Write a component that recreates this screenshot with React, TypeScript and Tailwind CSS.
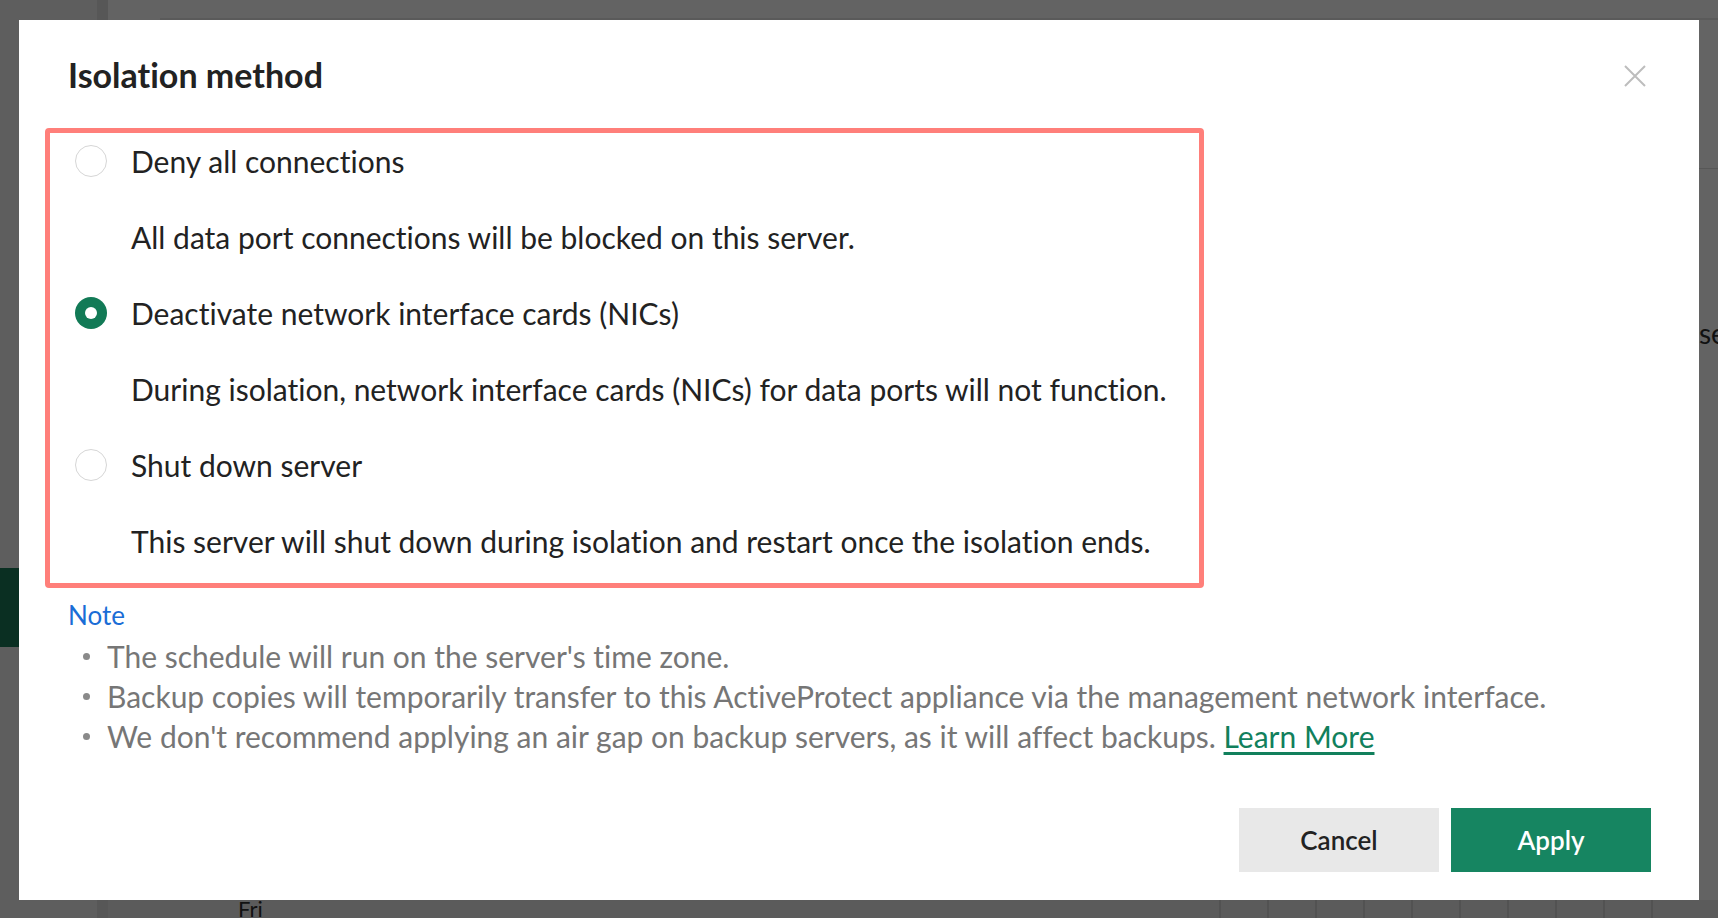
import { useState } from "react";

const options = [
  {
    id: "deny",
    label: "Deny all connections",
    desc: "All data port connections will be blocked on this server.",
  },
  {
    id: "nic",
    label: "Deactivate network interface cards (NICs)",
    desc: "During isolation, network interface cards (NICs) for data ports will not function.",
  },
  {
    id: "shutdown",
    label: "Shut down server",
    desc: "This server will shut down during isolation and restart once the isolation ends.",
  },
];

const notes = [
  "The schedule will run on the server's time zone.",
  "Backup copies will temporarily transfer to this ActiveProtect appliance via the management network interface.",
  "We don't recommend applying an air gap on backup servers, as it will affect backups.",
];

const Radio = ({ checked }: { checked: boolean }) =>
  checked ? (
    <span className="flex h-[32px] w-[32px] shrink-0 items-center justify-center rounded-full bg-[#127a56]">
      <span className="h-[12px] w-[12px] rounded-full bg-white" />
    </span>
  ) : (
    <span className="h-[32px] w-[32px] shrink-0 rounded-full border-[1.5px] border-[#d6d6d6] bg-white" />
  );

// page behind the dimmed overlay, only its edges show
const BackgroundPage = () => (
  <div className="flex h-screen w-full bg-[#636363]">
    <div className="flex w-[97px] flex-col bg-[#5e5e5e]">
      <div className="h-[568px]" />
      <div className="h-[79px] bg-[#0a2f22]" />
    </div>
    <div className="w-[11px] bg-[#575757]" />
    <div className="flex flex-1 flex-col">
      <div className="flex h-[20px]">
        <div className="w-[52px]" />
        <div className="flex-1 border-b-2 border-[#5a5a5a]" />
      </div>
      <div className="flex flex-1 justify-end">
        <div className="flex w-[19px] flex-col">
          <div className="h-[148px] bg-[#646464]" />
          <div className="h-[1px] bg-[#575757]" />
          <div className="whitespace-nowrap pt-[147px] text-[28px] leading-[34px] text-[#111]">
            se
          </div>
        </div>
      </div>
      <div className="flex h-[18px] bg-[#5b5b5b]">
        <div className="w-[52px]" />
        <div className="w-[78px]" />
        <div className="text-[22px] leading-[18px] text-[#111]">Fri</div>
        <div className="flex flex-1 justify-end">
          {Array.from({ length: 10 }).map((_, i) => (
            <div key={i} className="w-[48px] border-l-2 border-[#525252]" />
          ))}
          <div className="w-[19px]" />
        </div>
      </div>
    </div>
  </div>
);

export default function App() {
  const [selected, setSelected] = useState("nic");

  return (
    <div className="relative h-screen w-full overflow-hidden font-['Lato',sans-serif] [font-variant-ligatures:none]">
      <BackgroundPage />

      {/* Modal overlay */}
      <div className="fixed inset-0 flex pb-[18px] pl-[19px] pr-[19px] pt-[20px]">
        <div className="flex flex-1 flex-col bg-white pl-[49px] pr-[48px] pt-[33px]">
          {/* Header */}
          <div className="flex h-[44px] items-center justify-between">
            <h2 className="text-[34px] font-bold leading-[44px] text-[#222]">Isolation method</h2>
            <button className="mr-[5px] mt-[1px]" aria-label="Close">
              <svg width="22" height="22" viewBox="0 0 22 22" fill="none">
                <path d="M1 1L21 21M21 1L1 21" stroke="#bdbdbd" strokeWidth="2" />
              </svg>
            </button>
          </div>

          {/* Options */}
          <div className="ml-[-23px] mt-[31px] flex w-[1159px] flex-col gap-[36px] rounded-[4px] border-[5px] border-[#ff7f7a] pb-[22px] pl-[25px] pt-[8px]">
            {options.map((opt) => (
              <div key={opt.id} className="flex flex-col gap-[36px]">
                <label
                  className="flex h-[40px] cursor-pointer items-center gap-[24px]"
                  onClick={() => setSelected(opt.id)}
                >
                  <Radio checked={selected === opt.id} />
                  <span className="text-[30px] leading-[40px] text-[#222]">{opt.label}</span>
                </label>
                <p className="pl-[56px] text-[30px] leading-[40px] text-[#222]">{opt.desc}</p>
              </div>
            ))}
          </div>

          {/* Note */}
          <div className="mt-[11px] text-[26px] leading-[32px] text-[#1a6dd6]">Note</div>
          <ul className="mt-[5px] flex flex-col">
            {notes.map((n, i) => (
              <li key={i} className="flex items-center text-[30px] leading-[40px] text-[#767676]">
                <span className="ml-[15px] mr-[17px] h-[7px] w-[7px] shrink-0 rounded-full bg-[#8a8a8a]" />
                <span>
                  {n}
                  {i === notes.length - 1 && (
                    <>
                      {" "}
                      <a href="#" className="text-[#11805c] underline underline-offset-[4px]">
                        Learn More
                      </a>
                    </>
                  )}
                </span>
              </li>
            ))}
          </ul>

          {/* Footer */}
          <div className="mt-auto flex justify-end gap-[12px] pb-[28px]">
            <button className="h-[64px] w-[200px] bg-[#e8e8e8] text-[26px] font-semibold text-[#222]">
              Cancel
            </button>
            <button className="h-[64px] w-[200px] bg-[#168561] text-[26px] font-semibold text-white">
              Apply
            </button>
          </div>
        </div>
      </div>
    </div>
  );
}
